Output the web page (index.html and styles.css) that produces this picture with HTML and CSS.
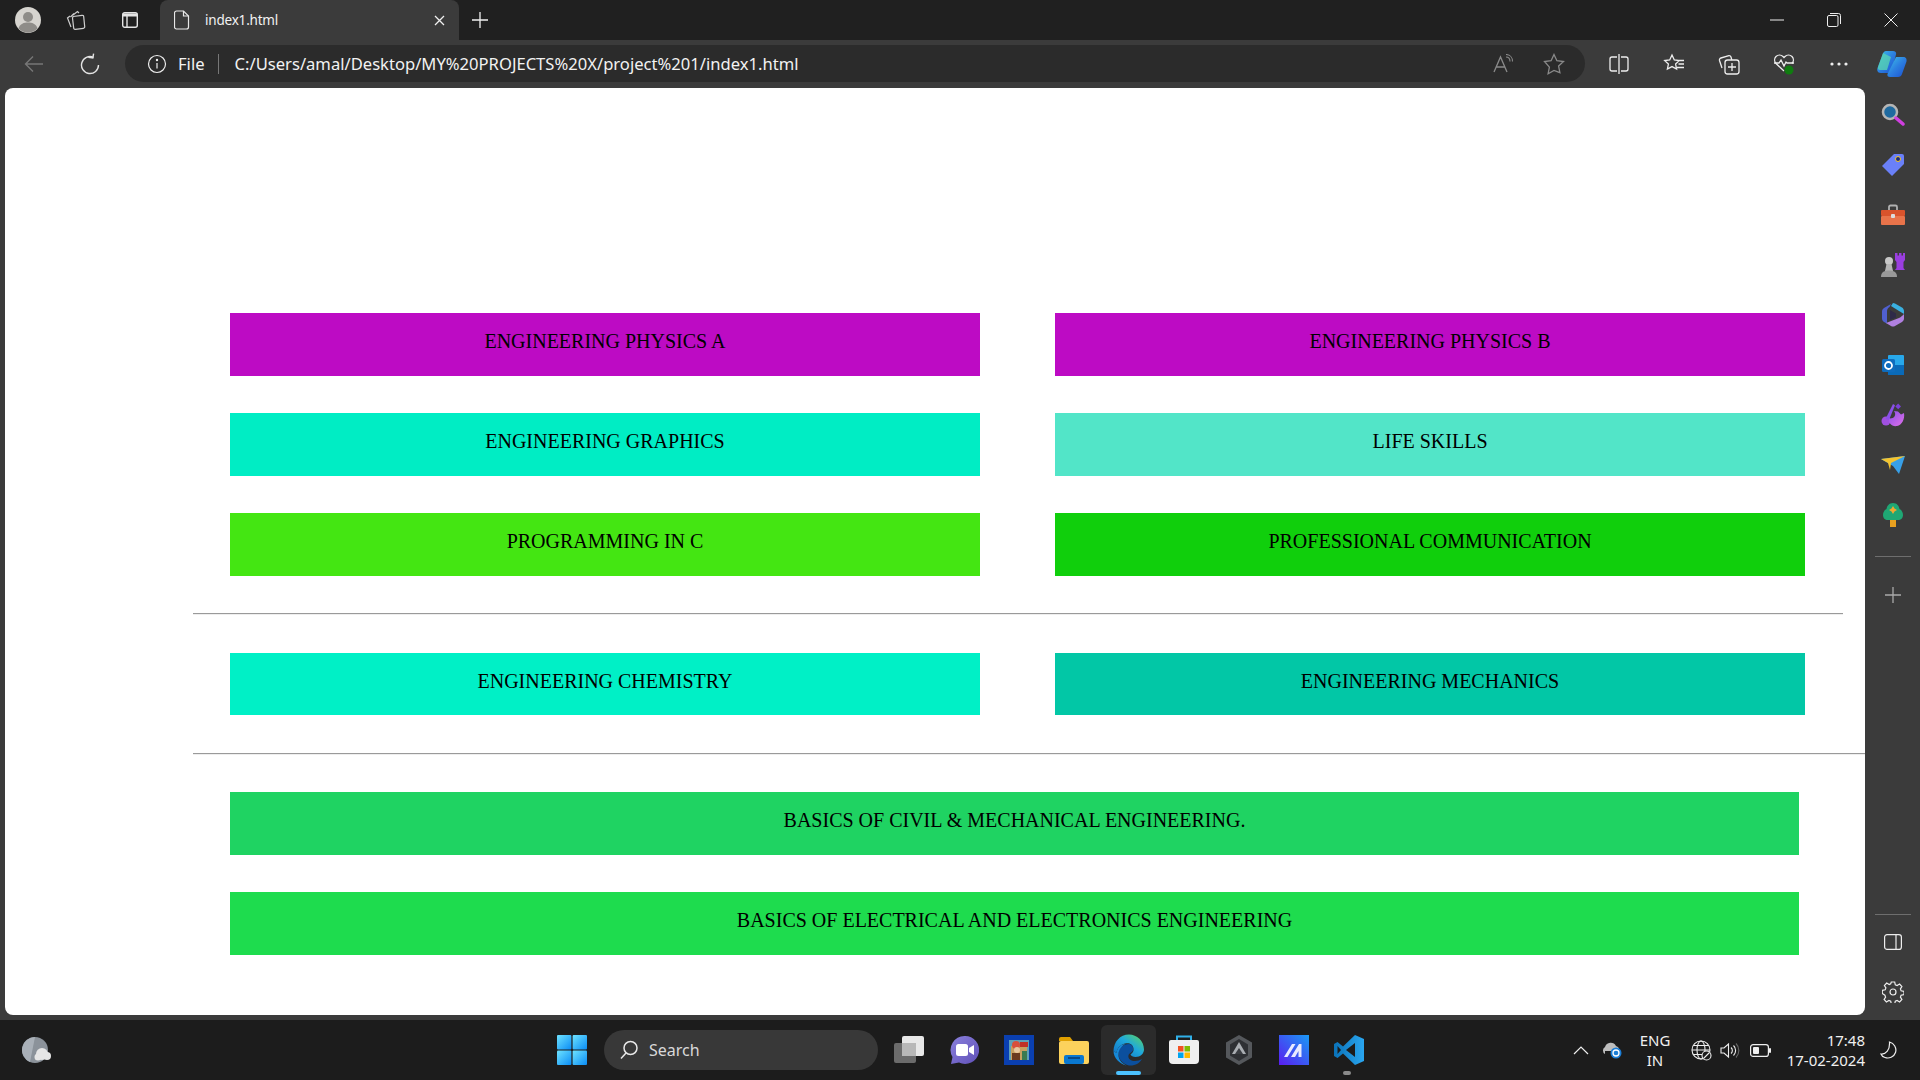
FILE: index.html
```html
<!DOCTYPE html>
<html lang="en">
<head>
    <meta charset="UTF-8">
    <title>index1.html</title>
    <link rel="stylesheet" href="styles.css">
</head>
<body>
    <svg class="defs" width="0" height="0">
        <defs>
            <linearGradient id="g-edge" x1="0" y1="1" x2="1" y2="0"><stop offset="0" stop-color="#0f6fc4"/><stop offset="0.55" stop-color="#1fa8dc"/><stop offset="1" stop-color="#5fd85a"/></linearGradient>
            <linearGradient id="g-copilot" x1="0" y1="0" x2="1" y2="1"><stop offset="0" stop-color="#3fc4e8"/><stop offset="0.5" stop-color="#2c7fe0"/><stop offset="1" stop-color="#1b4fd0"/></linearGradient>
            <linearGradient id="g-win" x1="0" y1="0" x2="1" y2="1"><stop offset="0" stop-color="#6ee3ff"/><stop offset="1" stop-color="#0a8cf5"/></linearGradient>
            <linearGradient id="g-vs" x1="0" y1="0" x2="1" y2="0"><stop offset="0" stop-color="#0a72b8"/><stop offset="1" stop-color="#2aa6f0"/></linearGradient>
            <linearGradient id="g-m" x1="0" y1="1" x2="1" y2="0"><stop offset="0" stop-color="#5a1cf0"/><stop offset="1" stop-color="#1a9af5"/></linearGradient>
            <linearGradient id="g-meet" x1="0" y1="0" x2="1" y2="1"><stop offset="0" stop-color="#8a80dc"/><stop offset="1" stop-color="#6050b8"/></linearGradient>
            <linearGradient id="g-wand" x1="0" y1="0" x2="1" y2="1"><stop offset="0" stop-color="#8a50e8"/><stop offset="1" stop-color="#e070e8"/></linearGradient>
        </defs>
    </svg>

    <div class="titlebar">
        <div class="tb-left">
            <span class="tb-btn">
                <svg width="26" height="26" viewBox="0 0 26 26"><circle cx="13" cy="13" r="13" fill="#d6d4cf"/><circle cx="13" cy="10" r="5" fill="#8e8c88"/><path d="M3.500 21.500C5 16.500 9 15.500 13 15.500s8 1 9.500 6A13 13 0 0 1 3.500 21.500z" fill="#8e8c88"/></svg>
            </span>
            <span class="tb-btn">
                <svg width="22" height="20" viewBox="0 0 22 20" fill="none" stroke="#cfcfcf" stroke-width="1.200"><path d="M9 6.500l9-1.200a1.500 1.500 0 0 1 1.700 1.300l1 10a1.500 1.500 0 0 1-1.300 1.700l-8 1.100a1.500 1.500 0 0 1-1.700-1.300L8.500 8z" transform="translate(-2 0)"/><path d="M7 5 11.500 1.500 13 3M4.500 7 8 3.500M5 17 1.500 8l2.500-2"/></svg>
            </span>
            <span class="tb-btn tb-vtabs">
                <svg width="18" height="18" viewBox="0 0 18 18" fill="none" stroke="#e4e4e4" stroke-width="1.400"><rect x="1.700" y="1.700" width="14.600" height="14.600" rx="2"/><path d="M1.700 4h14.600" stroke-width="3"/><path d="M6 5v11.300"/></svg>
            </span>
        </div>
        <div class="tab">
            <svg class="tab-icon" width="16" height="20" viewBox="0 0 16 20" fill="none" stroke="#e8e8e8" stroke-width="1.200"><path d="M2.500 1h7L14.500 6v11a2 2 0 0 1-2 2h-10a2 2 0 0 1-2-2V3a2 2 0 0 1 2-2z"/><path d="M9.500 1v5h5"/></svg>
            <span class="tab-title">index1.html</span>
            <svg width="11" height="11" viewBox="0 0 11 11" stroke="#f0f0f0" stroke-width="1.300"><path d="M1 1l9 9M10 1l-9 9"/></svg>
        </div>
        <span class="new-tab">
            <svg width="18" height="18" viewBox="0 0 18 18" stroke="#f0f0f0" stroke-width="1.300"><path d="M9 1v16M1 9h16"/></svg>
        </span>
        <div class="window-btns">
            <span class="win-btn"><svg width="14" height="2" viewBox="0 0 14 2"><path d="M0 1h14" stroke="#eee" stroke-width="1"/></svg></span>
            <span class="win-btn"><svg width="14" height="14" viewBox="0 0 14 14" fill="none" stroke="#eee"><rect x="0.500" y="2.500" width="10.500" height="11" rx="1.500"/><path d="M3 .5h8.500a2 2 0 0 1 2 2V11"/></svg></span>
            <span class="win-btn"><svg width="14" height="14" viewBox="0 0 14 14" stroke="#eee"><path d="M.5.5l13 13M13.500.5l-13 13"/></svg></span>
        </div>
    </div>

    <div class="toolbar">
        <span class="nav-btn">
            <svg width="20" height="18" viewBox="0 0 20 18" fill="none" stroke="#777" stroke-width="1.400"><path d="M19 9H1.500M9 1.500 1.500 9 9 16.500"/></svg>
        </span>
        <span class="nav-btn">
            <svg width="20" height="22" viewBox="0 0 20 22" fill="none" stroke="#e4e4e4" stroke-width="1.400"><path d="M13.500 4.300A8.500 8.500 0 1 0 18.500 12"/><path d="M13 .5v4.500h-4.500" transform="rotate(10 13 4)"/></svg>
        </span>
        <div class="address">
            <svg width="20" height="20" viewBox="0 0 20 20" fill="none" stroke="#eee" stroke-width="1.200"><circle cx="10" cy="10" r="8.500"/><path d="M10 9v5.500"/><circle cx="10" cy="6" r=".6" fill="#eee"/></svg>
            <span class="addr-file">File</span>
            <span class="addr-sep"></span>
            <span class="addr-url">C:/Users/amal/Desktop/MY%20PROJECTS%20X/project%201/index1.html</span>
            <span class="addr-tools">
                <svg width="22" height="20" viewBox="0 0 22 20" fill="none" stroke="#8a8a8a" stroke-width="1.300"><path d="M1 18 7.500 3 14 18M3.500 13h8"/><path d="M13 3c2.500 0 4 2 4 4.500M13 .5c4 0 6.500 3 6.500 7" stroke-width="1.100"/></svg>
                <svg width="22" height="22" viewBox="0 0 22 22" fill="none" stroke="#8a8a8a" stroke-width="1.300"><path d="M11 1.500l2.900 6.200 6.600.8-4.900 4.600 1.300 6.600L11 17.400l-5.900 3.300 1.300-6.600L1.500 8.500l6.600-.8z"/></svg>
            </span>
        </div>
        <div class="tool-btns">
            <span class="tool-btn"><svg width="20" height="20" viewBox="0 0 20 20" fill="none" stroke="#eee" stroke-width="1.300"><path d="M8 3H3a2 2 0 0 0-2 2v10a2 2 0 0 0 2 2h5M12 3h5a2 2 0 0 1 2 2v10a2 2 0 0 1-2 2h-5M10 0v20"/></svg></span>
            <span class="tool-btn"><svg width="22" height="22" viewBox="0 0 22 22" fill="none" stroke="#eee" stroke-width="1.300"><path d="M9 2l2.300 5 5 .6-3.700 3.500 1 5L9 13.600l-4.600 2.500 1-5L1.700 7.600l5-.6zM15 7.500h6M15.500 11h5.500M14 14.500h7"/></svg></span>
            <span class="tool-btn"><svg width="22" height="22" viewBox="0 0 22 22" fill="none" stroke="#eee" stroke-width="1.300"><rect x="7" y="7" width="14" height="14" rx="2.500"/><path d="M14 10v8M10 14h8"/><path d="M4 15 1.500 7.500a2 2 0 0 1 1.400-2.500l8-2.300A2 2 0 0 1 13 4l.8 3"/></svg></span>
            <span class="tool-btn"><svg width="22" height="22" viewBox="0 0 22 22"><path d="M11 18 3 10.500a5.200 5.200 0 0 1 0-7 5 5 0 0 1 7 0l1 1 1-1a5 5 0 0 1 7 0 5.200 5.200 0 0 1 0 7" fill="none" stroke="#eee" stroke-width="1.300"/><path d="M1 10h5l2-3 3 6 2-4 1 1h7" fill="none" stroke="#eee" stroke-width="1.300"/><circle cx="16" cy="17" r="4.500" fill="#107c10"/></svg></span>
            <span class="tool-btn"><svg width="18" height="4" viewBox="0 0 18 4" fill="#eee"><circle cx="2" cy="2" r="1.600"/><circle cx="9" cy="2" r="1.600"/><circle cx="16" cy="2" r="1.600"/></svg></span>
        </div>
        <span class="copilot">
            <svg width="30" height="27" viewBox="0 0 30 27"><path d="M9 1h7c2.500 0 3.500 1.500 3 3.500L15 20c-.5 2-2 3-4 3H4c-3 0-4.500-2-3.500-5L6 3.500C6.500 2 7.500 1 9 1z" fill="url(#g-copilot)"/><path d="M6 3 1 17c-.5 2 .5 3 2 3h7l4-13z" fill="#5ad8b0" opacity=".75"/><path d="M19 7h7c3 0 4 2 3.500 4.500L25 24c-.5 2-2 3-4 3h-8c-2 0-3-1-2.500-3z" fill="url(#g-copilot)"/></svg>
        </span>
    </div>

    <div class="middle">
        <main class="page">
            <div class="btn-row">
                <a class="subject c-physics">ENGINEERING PHYSICS A</a>
                <a class="subject c-physics">ENGINEERING PHYSICS B</a>
            </div>
            <div class="btn-row">
                <a class="subject c-graphics">ENGINEERING GRAPHICS</a>
                <a class="subject c-life">LIFE SKILLS</a>
            </div>
            <div class="btn-row">
                <a class="subject c-prog">PROGRAMMING IN C</a>
                <a class="subject c-comm">PROFESSIONAL COMMUNICATION</a>
            </div>
            <hr class="rule rule-short">
            <div class="btn-row row-middle">
                <a class="subject c-chem">ENGINEERING CHEMISTRY</a>
                <a class="subject c-mech">ENGINEERING MECHANICS</a>
            </div>
            <hr class="rule rule-long">
            <a class="subject wide c-civil">BASICS OF CIVIL &amp; MECHANICAL ENGINEERING.</a>
            <a class="subject wide c-elec">BASICS OF ELECTRICAL AND ELECTRONICS ENGINEERING</a>
        </main>

        <aside class="sidebar">
            <div class="side-apps">
                <span class="side-btn"><svg width="24" height="24" viewBox="0 0 24 24"><circle cx="9" cy="9" r="7" fill="#1f6aa0" stroke="#b5b5b5" stroke-width="2.500"/><path d="M15 15l7 6" stroke="#d03fe0" stroke-width="3.500" stroke-linecap="round"/></svg></span>
                <span class="side-btn"><svg width="24" height="24" viewBox="0 0 24 24"><path d="M13 1h8a2 2 0 0 1 2 2v8L11 23 1 13z" fill="#6a80f8"/><circle cx="17" cy="6" r="2.500" fill="#1a2a80" stroke="#f6c828"/></svg></span>
                <span class="side-btn"><svg width="24" height="22" viewBox="0 0 24 22"><path d="M8 6V3a1.500 1.500 0 0 1 1.500-1.500h5A1.500 1.500 0 0 1 16 3v3" fill="none" stroke="#b0b0b0" stroke-width="1.800"/><rect y="6" width="24" height="6" rx="1" fill="#d9532c"/><rect y="12" width="24" height="9" rx="1" fill="#e8734a"/><rect x="10" y="10" width="4" height="4" rx="1" fill="#ddd"/></svg></span>
                <span class="side-btn"><svg width="24" height="24" viewBox="0 0 24 24"><circle cx="8" cy="8" r="4" fill="#c8c8c8"/><path d="M5.500 11h5l1.500 7H4z" fill="#b5b5b5"/><path d="M0 24c0-4 2-6.500 8-6.500s8 2.500 8 6.500z" fill="#999"/><path d="M14 0h2.500v2.500H18V0h2.500v2.500H22V0h2v7l-1.500 2v6L24 17H14l1.500-2V9L14 7z" fill="#9a3ee0"/></svg></span>
                <span class="side-btn"><svg width="22" height="24" viewBox="0 0 22 24"><path d="M11 0a4 4 0 0 1 2 .5l7 4c1 .6 2 2 2 3.500v3L13 5.500 9 3z" fill="#3ab0e0"/><path d="M9 1 2 5C.8 5.800 0 7 0 8.500v7c0 1.500.8 2.700 2 3.500l3 1.500V8c0-1.500 1-3 2.500-4z" fill="#5060d0"/><path d="M22 11v4.500c0 1.500-.8 2.700-2 3.500l-7 4c-1.200.7-2.800.7-4 0l-5-3 13-5c1.500-.6 3-2 5-4z" fill="#b080e0"/><path d="M8 7l6 3.500v4L8 17z" fill="#2e2a48"/></svg></span>
                <span class="side-btn"><svg width="22" height="22" viewBox="0 0 22 22"><rect x="6" y="1" width="16" height="20" rx="1" fill="#28a8ea"/><path d="M6 11h16v10H6z" fill="#0a6ab8"/><rect y="5" width="13" height="13" rx="1.500" fill="#0f6cbd"/><circle cx="6.500" cy="11.500" r="3.500" fill="none" stroke="#fff" stroke-width="1.800"/></svg></span>
                <span class="side-btn"><svg width="24" height="24" viewBox="0 0 24 24"><circle cx="5" cy="18" r="4.500" fill="#a050e0"/><path d="M4.500 16 12 1l2 1.200L8 17z" fill="#8a50e8"/><path d="M13 8c3 4 0 8-5 7.500C7 20 11 24 16 23s8-7 7-13l-3 1.500-3-3z" fill="url(#g-wand)"/><path d="M18 0h4v4h-4z" fill="#7a40d8" transform="rotate(45 20 2) translate(-1 3)"/></svg></span>
                <span class="side-btn"><svg width="24" height="18" viewBox="0 0 24 18"><path d="M0 3l24-3-6 18-6-8z" fill="#38a0e8"/><path d="M0 3l24-3L10 7l-1 7-2-7z" fill="#f4c430"/></svg></span>
                <span class="side-btn"><svg width="20" height="24" viewBox="0 0 20 24"><path d="M10 0c4 0 6 3 6.500 6 2.500 1 3.500 4 3.500 6 0 3-2 5-5 5H5c-3 0-5-2-5-5 0-2 1-5 3.500-6C4 3 6 0 10 0z" fill="#1fa774"/><rect x="7" y="17" width="6" height="7" fill="#e8a020"/><path d="M10 3l1.500 2.500L14 7l-2.500 1.500L10 11 8.500 8.500 6 7l2.500-1.500z" fill="#f0a830"/></svg></span>
            </div>
            <span class="side-line"></span>
            <span class="side-plus"><svg width="16" height="16" viewBox="0 0 16 16" stroke="#aaa" stroke-width="1.300"><path d="M8 0v16M0 8h16"/></svg></span>
            <div class="side-bottom">
                <span class="side-line"></span>
                <span class="side-panel"><svg width="18" height="16" viewBox="0 0 18 16" fill="none" stroke="#eee" stroke-width="1.200"><rect x=".6" y=".6" width="16.800" height="14.800" rx="2.500"/><path d="M12 .6v14.800"/></svg></span>
                <span class="side-gear"><svg width="22" height="22" viewBox="0 0 22 22" fill="none" stroke="#eee" stroke-width="1.200"><circle cx="11" cy="11" r="3"/><path d="M9.300 1h3.400l.6 2.800 1.800.8 2.500-1.500 2.300 2.400-1.500 2.400.7 1.900 2.900.6v3.200l-2.900.6-.7 1.900 1.500 2.400-2.300 2.400-2.500-1.500-1.800.8-.6 2.800H9.300l-.6-2.800-1.800-.8-2.500 1.500-2.300-2.400 1.500-2.400-.7-1.900L.3 12.600V9.400l2.900-.6.700-1.900L2.400 4.500l2.300-2.400 2.500 1.500 1.500-.8z"/></svg></span>
            </div>
        </aside>
    </div>

    <footer class="taskbar">
        <span class="weather">
            <svg width="30" height="30" viewBox="0 0 30 30"><ellipse cx="13" cy="15" rx="13" ry="13" fill="#8b929a"/><path d="M13 2a13 13 0 0 0-5 25z" fill="#a9b0b8"/><circle cx="20" cy="19" r="6" fill="#e6e6e6"/><circle cx="25" cy="21" r="4" fill="#e6e6e6"/><circle cx="16" cy="22" r="3.500" fill="#e6e6e6"/></svg>
        </span>
        <div class="task-center">
            <span class="start">
                <svg width="30" height="30" viewBox="0 0 30 30" fill="url(#g-win)"><rect width="14.400" height="14.400" rx="1"/><rect x="15.600" width="14.400" height="14.400" rx="1"/><rect y="15.600" width="14.400" height="14.400" rx="1"/><rect x="15.600" y="15.600" width="14.400" height="14.400" rx="1"/></svg>
            </span>
            <div class="task-search">
                <svg width="20" height="20" viewBox="0 0 20 20" fill="none" stroke="#e8e8e8" stroke-width="1.500"><circle cx="11.500" cy="8" r="6.500"/><path d="M7 13 2 18.500"/></svg>
                <span>Search</span>
            </div>
            <div class="task-apps">
                <span class="task-app"><svg width="30" height="30" viewBox="0 0 30 30"><rect y="8" width="22" height="20" rx="2" fill="#6b6b6b"/><rect x="8" y="1" width="22" height="20" rx="2" fill="#e8e8e8"/><rect x="8" y="8" width="14" height="13" fill="#b8b8b8"/></svg></span>
                <span class="task-app"><svg width="30" height="30" viewBox="0 0 30 30"><path d="M16 1a14 14 0 1 1-6 26.600L2 29l1.500-7A14 14 0 0 1 16 1z" fill="url(#g-meet)"/><rect x="7" y="9" width="12" height="12" rx="2.500" fill="#fff"/><path d="M20 13l5-3v10l-5-3z" fill="#fff"/></svg></span>
                <span class="task-app"><svg width="30" height="30" viewBox="0 0 30 30"><rect width="30" height="30" fill="#0a3fb0"/><rect x="5" y="5" width="20" height="20" fill="#5fa0b8"/><rect x="7" y="11" width="16" height="14" fill="#c8a060"/><circle cx="12" cy="10" r="4" fill="#d8503c"/><rect x="16" y="7" width="8" height="5" fill="#c03028"/><circle cx="13" cy="15" r="3" fill="#e8c8a0"/><rect x="8" y="18" width="8" height="7" fill="#6a3a20"/><rect x="18" y="16" width="5" height="9" fill="#3a7a50"/></svg></span>
                <span class="task-app"><svg width="30" height="28" viewBox="0 0 30 28"><path d="M0 3a2 2 0 0 1 2-2h9l3 4H0z" fill="#e0a000"/><rect y="5" width="30" height="23" rx="2" fill="#fcd25c"/><rect x="5" y="19" width="20" height="9" rx="2" fill="#0a78d0"/><path d="M9 22h12" stroke="#083a70" stroke-width="1.500"/></svg></span>
                <span class="task-app active">
                    <svg width="32" height="32" viewBox="0 0 32 32"><path d="M16 10c-6 0-10.500 4.500-10.500 10 0 5 4 10 10.500 11.500 6 .5 11-2.500 13-6.500-3 2-9 3-12 .5-2.500-2-2-5.500 1-7 2-1 3-3.500 1.500-6-.8-1.500-2-2.500-3.500-2.500z" fill="#0b4f9e"/><path d="M16 .5C24 .5 31 7 31 15.500c0 4-3.500 7.500-8.500 7.500-2.500 0-4.500-1-5-2.500 2-1.500 3.500-3 3-6C20 10 16 8.500 12 9.500 7.500 10.500 4 14 3.500 19L.5 17C.5 8 7 .5 16 .5z" fill="url(#g-edge)"/><path d="M.5 17c0 7 6 13 13 14.500C8 29 5 24.500 5.500 20c.2-4 3-8 7-10C7.500 10 4 14 3.500 19z" fill="#1688d8"/></svg>
                    <i class="app-dot"></i>
                </span>
                <span class="task-app"><svg width="30" height="30" viewBox="0 0 30 30"><path d="M8 6V1.500h14V6" fill="none" stroke="#30b0e8" stroke-width="2"/><path d="M2 5h26a2 2 0 0 1 2 2v18a4 4 0 0 1-4 4H4a4 4 0 0 1-4-4V7a2 2 0 0 1 2-2z" fill="#efefef"/><rect x="9" y="11" width="5.500" height="5.500" fill="#f25022"/><rect x="15.500" y="11" width="5.500" height="5.500" fill="#7fba00"/><rect x="9" y="17.500" width="5.500" height="5.500" fill="#00a4ef"/><rect x="15.500" y="17.500" width="5.500" height="5.500" fill="#ffb900"/></svg></span>
                <span class="task-app"><svg width="28" height="30" viewBox="0 0 28 30"><path d="M14 0 27 7.500v15L14 30 1 22.500v-15z" fill="#55585c"/><path d="M14 4 23 9.500v11L14 26 5 20.500v-11z" fill="#2e3034"/><path d="M14 7 21 19H7z" fill="#a9adb2"/><path d="M14 13l4 6H10z" fill="#3a3d42"/></svg></span>
                <span class="task-app"><svg width="30" height="30" viewBox="0 0 30 30"><rect width="30" height="30" fill="url(#g-m)"/><path d="M5 22 13 9h3.500L8.500 22zM12 22 20 9h2.500v13h-3v-6l-3.500 6z" fill="#e8eaff"/></svg></span>
                <span class="task-app">
                    <svg width="30" height="30" viewBox="0 0 30 30"><path d="M21 0 30 4v22l-9 4-12-11.500L3.500 23 0 21v-12l3.500-2 5.500 4.500z" fill="url(#g-vs)"/><path d="M21 8 12 15l9 7z" fill="#1c1c1c"/><path d="M3.500 11v8L7 15z" fill="#1c1c1c"/></svg>
                    <i class="app-dot idle"></i>
                </span>
            </div>
        </div>
        <div class="tray">
            <svg class="tray-chev" width="16" height="9" viewBox="0 0 16 9" fill="none" stroke="#eee" stroke-width="1.200"><path d="M1 8l7-7 7 7"/></svg>
            <svg class="tray-cloud" width="22" height="18" viewBox="0 0 22 18"><path d="M4 13a4 4 0 0 1 0-7 6 6 0 0 1 11-1 4 4 0 0 1 3 5H4z" fill="#bdbdbd"/><circle cx="15" cy="12" r="5.500" fill="#1c7fd8"/><path d="M12 12a3 3 0 0 1 6 0" fill="none" stroke="#fff" stroke-width="1.300"/><path d="M18 12a3 3 0 0 1-6 0" fill="none" stroke="#fff" stroke-width="1.300"/></svg>
            <span class="tray-lang">ENG<br>IN</span>
            <svg class="tray-globe" width="21" height="21" viewBox="0 0 21 21" fill="none" stroke="#eee" stroke-width="1.100"><circle cx="10" cy="10" r="9"/><ellipse cx="10" cy="10" rx="4" ry="9"/><path d="M1 10h18M2.500 5.500h15M2.500 14.500h15"/><circle cx="15.500" cy="15.500" r="4.500" fill="#1c1c1c"/><path d="M12.500 18.500l6-6"/></svg>
            <svg class="tray-vol" width="20" height="17" viewBox="0 0 20 17" fill="none" stroke="#eee" stroke-width="1.100"><path d="M1 6h3l4.500-4v13L4 11H1z"/><path d="M11 5.500a4 4 0 0 1 0 6M13.500 3.500a7 7 0 0 1 0 10"/><path d="M16 1.500a10 10 0 0 1 0 14" stroke="#666"/></svg>
            <svg class="tray-batt" width="21" height="13" viewBox="0 0 21 13"><rect x=".6" y=".6" width="17.800" height="11.800" rx="2.500" fill="none" stroke="#eee" stroke-width="1.200"/><rect x="3" y="3" width="6" height="7" rx="1" fill="#eee"/><rect x="19" y="4" width="2" height="5" rx="1" fill="#eee"/></svg>
            <span class="tray-time">17:48<br>17-02-2024</span>
            <svg class="tray-moon" width="18" height="18" viewBox="0 0 18 18" fill="none" stroke="#eee" stroke-width="1.200"><path d="M9.500 1c4.500 1 7.500 6 6 10.500C14 16 9 18 5 16.500 3 16 1.500 14.500 1 13c5 .5 9-4 8.500-12z"/></svg>
        </div>
    </footer>
</body>
</html>
```
FILE: styles.css
```css
* { box-sizing: border-box; }
html, body { margin: 0; padding: 0; }
body { width: 1920px; height: 1080px; overflow: hidden; display: flex; flex-direction: column; background: #3b3b3b; font-family: "Noto Sans", "Open Sans", sans-serif; color: #f2f2f2; }
svg { display: block; flex: none; }
.defs { position: absolute; }

/* title bar */
.titlebar { height: 40px; background: #202020; display: flex; flex: none; }
.tb-left { width: 160px; display: flex; padding-left: 3px; }
.tb-btn { width: 49px; display: flex; align-items: center; justify-content: center; }
.tb-vtabs { margin-left: 4px; }
.tab { width: 299px; background: #3b3b3b; border-radius: 8px 8px 0 0; display: flex; align-items: center; padding: 0 14px 0 14px; }
.tab-icon { margin-right: 15px; }
.tab-title { flex: 1; font-size: 13.500px; letter-spacing: -.2px; }
.new-tab { width: 42px; display: flex; align-items: center; justify-content: center; }
.window-btns { margin-left: auto; display: flex; padding-right: 1px; }
.win-btn { width: 57px; display: flex; align-items: center; justify-content: center; }

/* toolbar */
.toolbar { height: 48px; background: #3b3b3b; display: flex; align-items: center; flex: none; padding: 0 0 1px 6px; }
.nav-btn { width: 56px; display: flex; justify-content: center; }
.address { margin-left: 7px; width: 1460px; height: 37px; background: #2b2b2b; border-radius: 19px; display: flex; align-items: center; padding: 0 20px 0 22px; font-size: 16.600px; }
.addr-file { margin-left: 11px; }
.addr-sep { width: 1px; height: 20px; background: #777; margin: 0 16px 0 13px; }
.addr-tools { margin-left: auto; display: flex; align-items: center; gap: 28px; }
.tool-btns { margin-left: 6px; display: flex; }
.tool-btn { width: 55px; height: 37px; display: flex; align-items: center; justify-content: center; }
.copilot { padding-left: 11px; }

/* page */
.middle { flex: 1; display: flex; min-height: 0; }
.page { width: 1860px; height: 927px; margin-left: 5px; background: #fff; border-radius: 8px; padding: 225px 0 0 188px; color: #000; font-family: "Liberation Serif", "Times New Roman", serif; font-size: 20px; }
.btn-row { display: flex; gap: 75px; margin: 0 0 37px 37px; }
.row-middle { margin-bottom: 38px; }
.subject { display: block; width: 750px; height: 63px; padding-top: 17px; line-height: 23px; text-align: center; }
.row-middle .subject { height: 62px; }
.subject.wide { width: 1569px; margin: 0 0 37px 37px; }
.c-physics { background: #bd0bc4; }
.c-graphics { background: #00edc4; }
.c-life { background: #52e5c8; }
.c-prog { background: #44e612; }
.c-comm { background: #10cf0c; }
.c-chem { background: #00f0c6; }
.c-mech { background: #02c7a6; }
.c-civil { background: #1fd362; }
.c-elec { background: #1edc4e; }
.rule { margin: 0 0 38px 0; height: 2px; border: 0; border-top: 1px solid #9a9a9a; border-bottom: 1px solid #eee; }
.rule-short { width: 1650px; }
.rule-long { width: 1672px; margin-bottom: 37px; }

/* sidebar */
.sidebar { width: 55px; display: flex; flex-direction: column; align-items: center; height: 932px; padding-top: 2px; }
.side-apps { display: flex; flex-direction: column; }
.side-btn { width: 55px; height: 50px; display: flex; align-items: center; justify-content: center; }
.side-line { display: block; width: 36px; height: 1px; background: #6e6e6e; flex: none; }
.side-apps + .side-line { margin-top: 16px; }
.side-plus { margin-top: 30px; }
.side-bottom { margin-top: auto; display: flex; flex-direction: column; align-items: center; padding-bottom: 17px; }
.side-panel { margin-top: 19px; }
.side-gear { margin-top: 31px; }

/* taskbar */
.taskbar { height: 60px; background: #1c1c1c; display: flex; align-items: center; flex: none; padding-left: 22px; }
.weather { width: 30px; }
.task-center { margin-left: 500px; display: flex; align-items: center; }
.start { width: 40px; display: flex; justify-content: center; }
.task-search { margin-left: 12px; width: 274px; height: 40px; border-radius: 20px; background: #383838; display: flex; align-items: center; gap: 10px; padding-left: 15px; font-size: 16px; color: #d8d8d8; }
.task-apps { display: flex; margin-left: 3px; }
.task-app { position: relative; width: 55px; height: 50px; display: flex; align-items: center; justify-content: center; border-radius: 6px; }
.task-app.active { background: #2b2b2b; }
.app-dot { position: absolute; bottom: 0; left: 15px; width: 25px; height: 4px; border-radius: 2px; background: #4cc2ff; }
.app-dot.idle { left: 22px; width: 8px; background: #8a8a8a; }
.tray { margin-left: 197px; display: flex; align-items: center; font-size: 15px; color: #f0f0f0; }
.tray-cloud { margin-left: 12px; }
.tray-lang { margin-left: 12px; width: 40px; text-align: center; line-height: 20px; }
.tray-globe { margin-left: 16px; }
.tray-vol { margin-left: 8px; }
.tray-batt { margin-left: 10px; }
.tray-time { margin-left: 10px; width: 84px; text-align: right; line-height: 20px; white-space: nowrap; }
.tray-moon { margin-left: 15px; }
```
